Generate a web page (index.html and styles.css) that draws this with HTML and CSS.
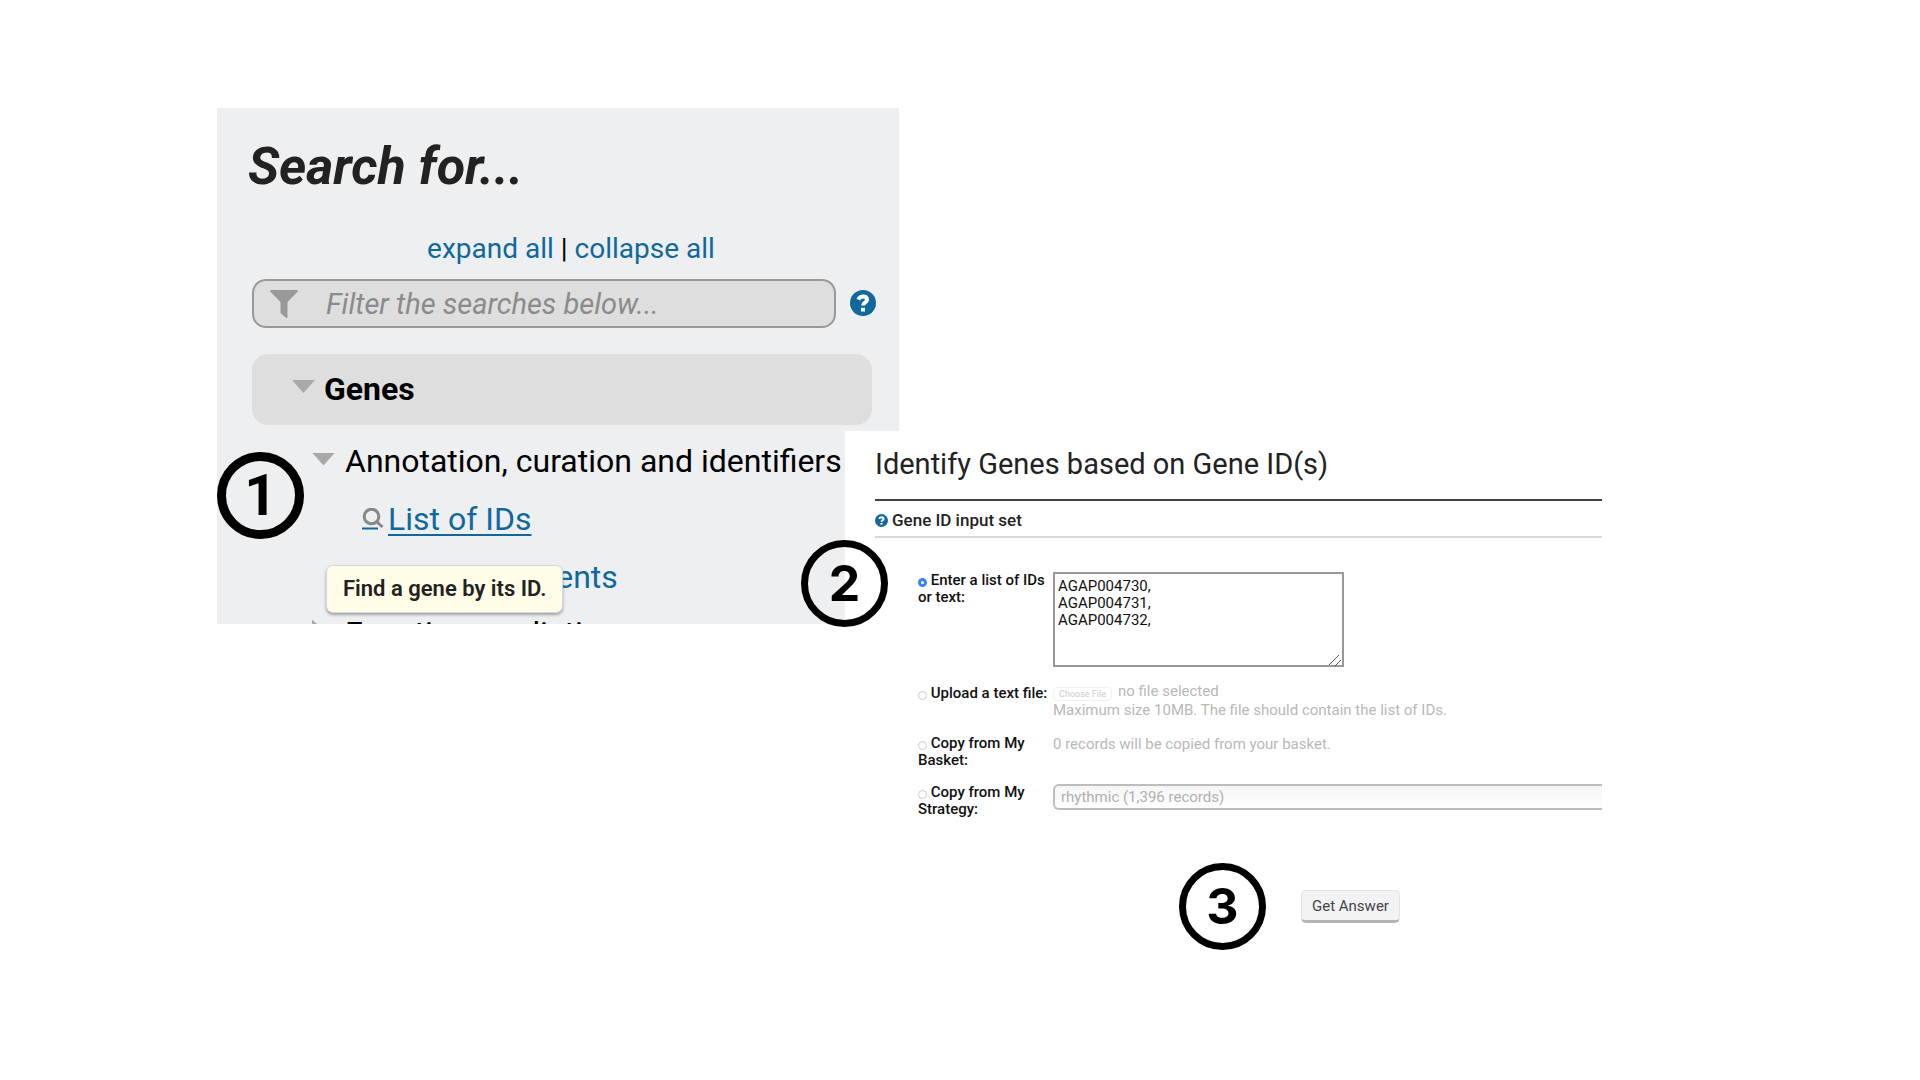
FILE: index.html
```html
<!DOCTYPE html>
<html lang="en">
<head>
<meta charset="utf-8">
<title>Find genes by ID</title>
<link rel="stylesheet" href="styles.css">
</head>
<body>
<main class="stage">
  <section class="search">
    <h1 class="search-title">Search for...</h1>
    <p class="toggles"><a href="#expand">expand all</a> | <a href="#collapse">collapse all</a></p>
    <div class="filter">
      <div class="filter-box">
        <svg class="funnel" viewBox="0 0 28 28" aria-hidden="true"><path d="M1 0h26q1.500 .8 .6 1.800L17.500 12v15q-.4 1.400-1.600 .7L10.500 23V12L.4 1.800Q-.2 .6 1 0z"/></svg>
        <input class="filter-input" type="text" aria-label="Filter the searches" placeholder="Filter the searches below...">
      </div>
      <button class="help" type="button" aria-label="Help">
        <svg class="help-icon" viewBox="0 0 26 26"><circle cx="13" cy="13" r="13"/><path class="help-hook" d="M8.300 9.700q1.500-3.100 4.700-3.100 4 0 4 3.300 0 1.600-1.900 2.700-1.900 1-1.900 2.800"/><path class="help-dot" d="M11 17.800h4v3.700h-4z"/></svg>
      </button>
    </div>
    <div class="group"><span class="caret"></span>Genes</div>
    <ul class="tree">
      <li class="branch"><span class="caret"></span>Annotation, curation and identifiers</li>
      <li class="leaf"><svg class="lens" viewBox="0 0 22 22" aria-hidden="true"><circle cx="9.500" cy="8.500" r="7.300"/><path d="M14.500 13.500l6 5.500"/><path class="lens-line" d="M0 20.500h16"/></svg><a class="current" href="#ids">List of IDs</a></li>
      <li class="leaf"><svg class="lens" viewBox="0 0 22 22" aria-hidden="true"><circle cx="9.500" cy="8.500" r="7.300"/><path d="M14.500 13.500l6 5.500"/></svg><a href="#comments">User Comments</a></li>
      <li class="branch"><span class="caret caret-closed"></span>Function prediction</li>
    </ul>
    <div class="tooltip" role="tooltip">Find a gene by its ID.</div>
  </section>

  <section class="identify">
    <h2 class="identify-title">Identify Genes based on Gene ID(s)</h2>
    <h3 class="param">
      <svg class="param-icon" viewBox="0 0 26 26" aria-hidden="true"><circle cx="13" cy="13" r="13"/><path class="help-hook" d="M8.300 9.700q1.500-3.100 4.700-3.100 4 0 4 3.300 0 1.600-1.900 2.700-1.900 1-1.900 2.800"/><path class="help-dot" d="M11 17.800h4v3.700h-4z"/></svg>
      Gene ID input set
    </h3>
    <form class="form">
      <label class="choice"><input class="radio" type="radio" name="source" checked> Enter a list of IDs or text:</label>
      <div class="list-box">
        <textarea class="ids" aria-label="List of IDs">AGAP004730,
AGAP004731,
AGAP004732,</textarea>
        <svg class="grip" viewBox="0 0 12 12" aria-hidden="true"><path d="M0 11L10 1M6 12l6-6"/></svg>
      </div>
      <label class="choice choice-file"><input class="radio" type="radio" name="source"> Upload a text file:</label>
      <div class="off">
        <div class="file"><button class="choose" type="button" disabled>Choose File</button>no file selected</div>
        Maximum size 10MB. The file should contain the list of IDs.
      </div>
      <label class="choice"><input class="radio" type="radio" name="source"> Copy from My Basket:</label>
      <div class="off">0 records will be copied from your basket.</div>
      <label class="choice"><input class="radio" type="radio" name="source"> Copy from My Strategy:</label>
      <select class="strategy" aria-label="Strategy" disabled><option>rhythmic (1,396 records)</option></select>
    </form>
    <div class="actions">
      <span class="badge">3</span>
      <button class="answer" type="button">Get Answer</button>
    </div>
  </section>
  <span class="badge badge-one">1</span>
  <span class="badge badge-two">2</span>
</main>
</body>
</html>
```
FILE: styles.css
```css
* { box-sizing: border-box; }

body {
  margin: 0;
  background: #fff;
  color: #000;
  font-family: Roboto, sans-serif;
}

h1, h2, h3, p, ul { margin: 0; padding: 0; }
a { color: #11689c; text-decoration: none; }

.stage {
  position: relative;
  display: grid;
  grid-template-columns: 628fr 54fr 703fr;
  grid-template-rows: 323px 193px auto;
  padding: 108px 318px 108px 217px;
}

/* Search menu */
.search {
  position: relative;
  grid-column: 1 / 3;
  grid-row: 1 / 3;
  overflow: hidden;
  padding: 25px 27px 0 35px;
  background: #eeeff1;
}

.search-title {
  margin: 0 0 32px -4px;
  color: #222;
  font-size: 52px;
  font-style: italic;
  font-weight: 700;
  line-height: 68px;
}

.toggles {
  padding-left: 18px;
  font-size: 28px;
  line-height: 32px;
  text-align: center;
}

.filter {
  display: flex;
  align-items: center;
  gap: 14px;
  margin: 14px -4px 26px 0;
}

.filter-box {
  display: flex;
  flex: 1;
  align-items: center;
  gap: 28px;
  height: 49px;
  padding: 0 16px;
  border: 2px solid #999;
  border-radius: 14px;
  background: #dedede;
}

.funnel { flex: none; width: 28px; height: 28px; fill: #999; }

.filter-input {
  flex: 1;
  min-width: 0;
  padding: 0;
  border: 0;
  background: none;
  font: italic 29px/36px Roboto, sans-serif;
}
.filter-input::placeholder { color: #8b8b8b; opacity: 1; }

.help { display: flex; padding: 0 0 2px; border: 0; background: none; }
.help-icon { width: 26px; height: 26px; fill: #11689c; }
.help-hook { fill: none; stroke: #fff; stroke-width: 4; }
.help-dot { fill: #fff; }

.group {
  display: flex;
  align-items: center;
  gap: 9px;
  height: 71px;
  padding: 0 40px 2px;
  border-radius: 16px;
  background: #dedede;
  font-size: 32px;
  font-weight: 700;
}

.caret {
  flex: none;
  width: 23px;
  height: 13px;
  margin-bottom: 4px;
  background: #a9a9a9;
  clip-path: polygon(0 0, 100% 0, 50% 100%);
}
.caret-closed {
  width: 13px;
  height: 23px;
  margin-right: 10px;
  clip-path: polygon(0 0, 100% 50%, 0 100%);
}

.tree { padding-top: 7px; list-style: none; font-size: 32px; line-height: 58px; white-space: nowrap; }
.branch { display: flex; align-items: center; gap: 10px; padding-left: 60px; }
.leaf + .branch { margin-top: -2px; }
.leaf { display: flex; align-items: center; gap: 4px; padding-left: 110px; }
.lens { flex: none; width: 22px; height: 22px; fill: none; stroke: #888; stroke-width: 3; }
.lens-line { stroke: #11689c; stroke-width: 2; }
.current { text-decoration: underline; text-decoration-thickness: 2px; text-underline-offset: 4px; }

.tooltip {
  position: absolute;
  top: 457px;
  left: 109px;
  padding: 8px 16px;
  border: 1px solid #d4d6e4;
  border-radius: 7px;
  background: #fffde7;
  box-shadow: 0 2px 3px #888b;
  color: #222;
  font-size: 22px;
  font-weight: 600;
  line-height: 30px;
}

/* Gene ID question */
.identify {
  position: relative;
  grid-column: 2 / 4;
  grid-row: 2 / 4;
  padding: 12px 0 0 30px;
  background: #fff;
}

.identify-title {
  padding-bottom: 13px;
  border-bottom: 2px solid #444;
  color: #222;
  font-size: 29px;
  font-weight: 400;
  line-height: 43px;
}

.param {
  display: flex;
  align-items: center;
  gap: 4px;
  padding: 8px 0 5px;
  border-bottom: 2px solid #d9d9d9;
  color: #222;
  font-size: 17px;
  font-weight: 500;
  line-height: 22px;
}
.param-icon { width: 13px; height: 13px; fill: #11689c; }

.form {
  display: grid;
  grid-template-columns: 135px 1fr;
  row-gap: 15px;
  padding: 34px 0 0 43px;
  font-size: 15px;
  line-height: 17px;
}

.choice { color: #111; font-weight: 500; }
.choice-file { padding-top: 3px; }

.radio {
  appearance: none;
  width: 9px;
  height: 9px;
  margin: 0;
  border: 1px solid #ccc;
  border-radius: 50%;
  vertical-align: -2px;
}
.radio:checked { border: 3px solid #3b82f6; }

.list-box { position: relative; width: 291px; }
.ids {
  display: block;
  width: 100%;
  height: 95px;
  padding: 4px 3px;
  border: 2px solid #999;
  background: #fff;
  color: #111;
  font: 15px/17px Roboto, sans-serif;
  resize: none;
}
.grip {
  position: absolute;
  right: 3px;
  bottom: 1px;
  width: 12px;
  height: 12px;
  fill: none;
  stroke: #555;
}

.off { color: #b8b8b8; line-height: 19px; }
.file { display: flex; align-items: flex-end; gap: 6px; }
.choose {
  width: 59px;
  height: 14px;
  padding: 0;
  border: 1px solid #f2f2f2;
  border-radius: 4px;
  background: #fff;
  color: #ccc;
  font: 9px/12px Roboto, sans-serif;
}

.strategy {
  appearance: none;
  height: 26px;
  padding: 0 6px;
  border: 2px solid #bdbdbd;
  border-right: 0;
  border-radius: 6px 0 0 6px;
  background: linear-gradient(#f5f5f5, #fff);
  color: #b0b0b0;
  font: 15px/20px Roboto, sans-serif;
  opacity: 1;
}

.actions { display: flex; align-items: center; gap: 35px; margin: 45px 0 0 304px; }

.answer {
  height: 33px;
  padding: 0 10px;
  border: 1px solid #e3e3e5;
  border-bottom: 3px solid #b4b4b6;
  border-radius: 5px;
  background: #f3f3f5;
  color: #444;
  font: 15px/20px Roboto, sans-serif;
}

/* Step numbers */
.badge {
  display: flex;
  flex: none;
  align-items: center;
  justify-content: center;
  width: 87px;
  height: 87px;
  padding-bottom: 2px;
  border: 7px solid #000;
  border-radius: 50%;
  font: 700 50px/1 Inter, sans-serif;
}
.badge-one {
  position: absolute;
  top: 452px;
  left: 217px;
  padding-bottom: 0;
  border-width: 9px;
  font: 700 57px/1 Roboto, sans-serif;
}
.badge-two { position: absolute; top: 540px; left: 801px; }
```
